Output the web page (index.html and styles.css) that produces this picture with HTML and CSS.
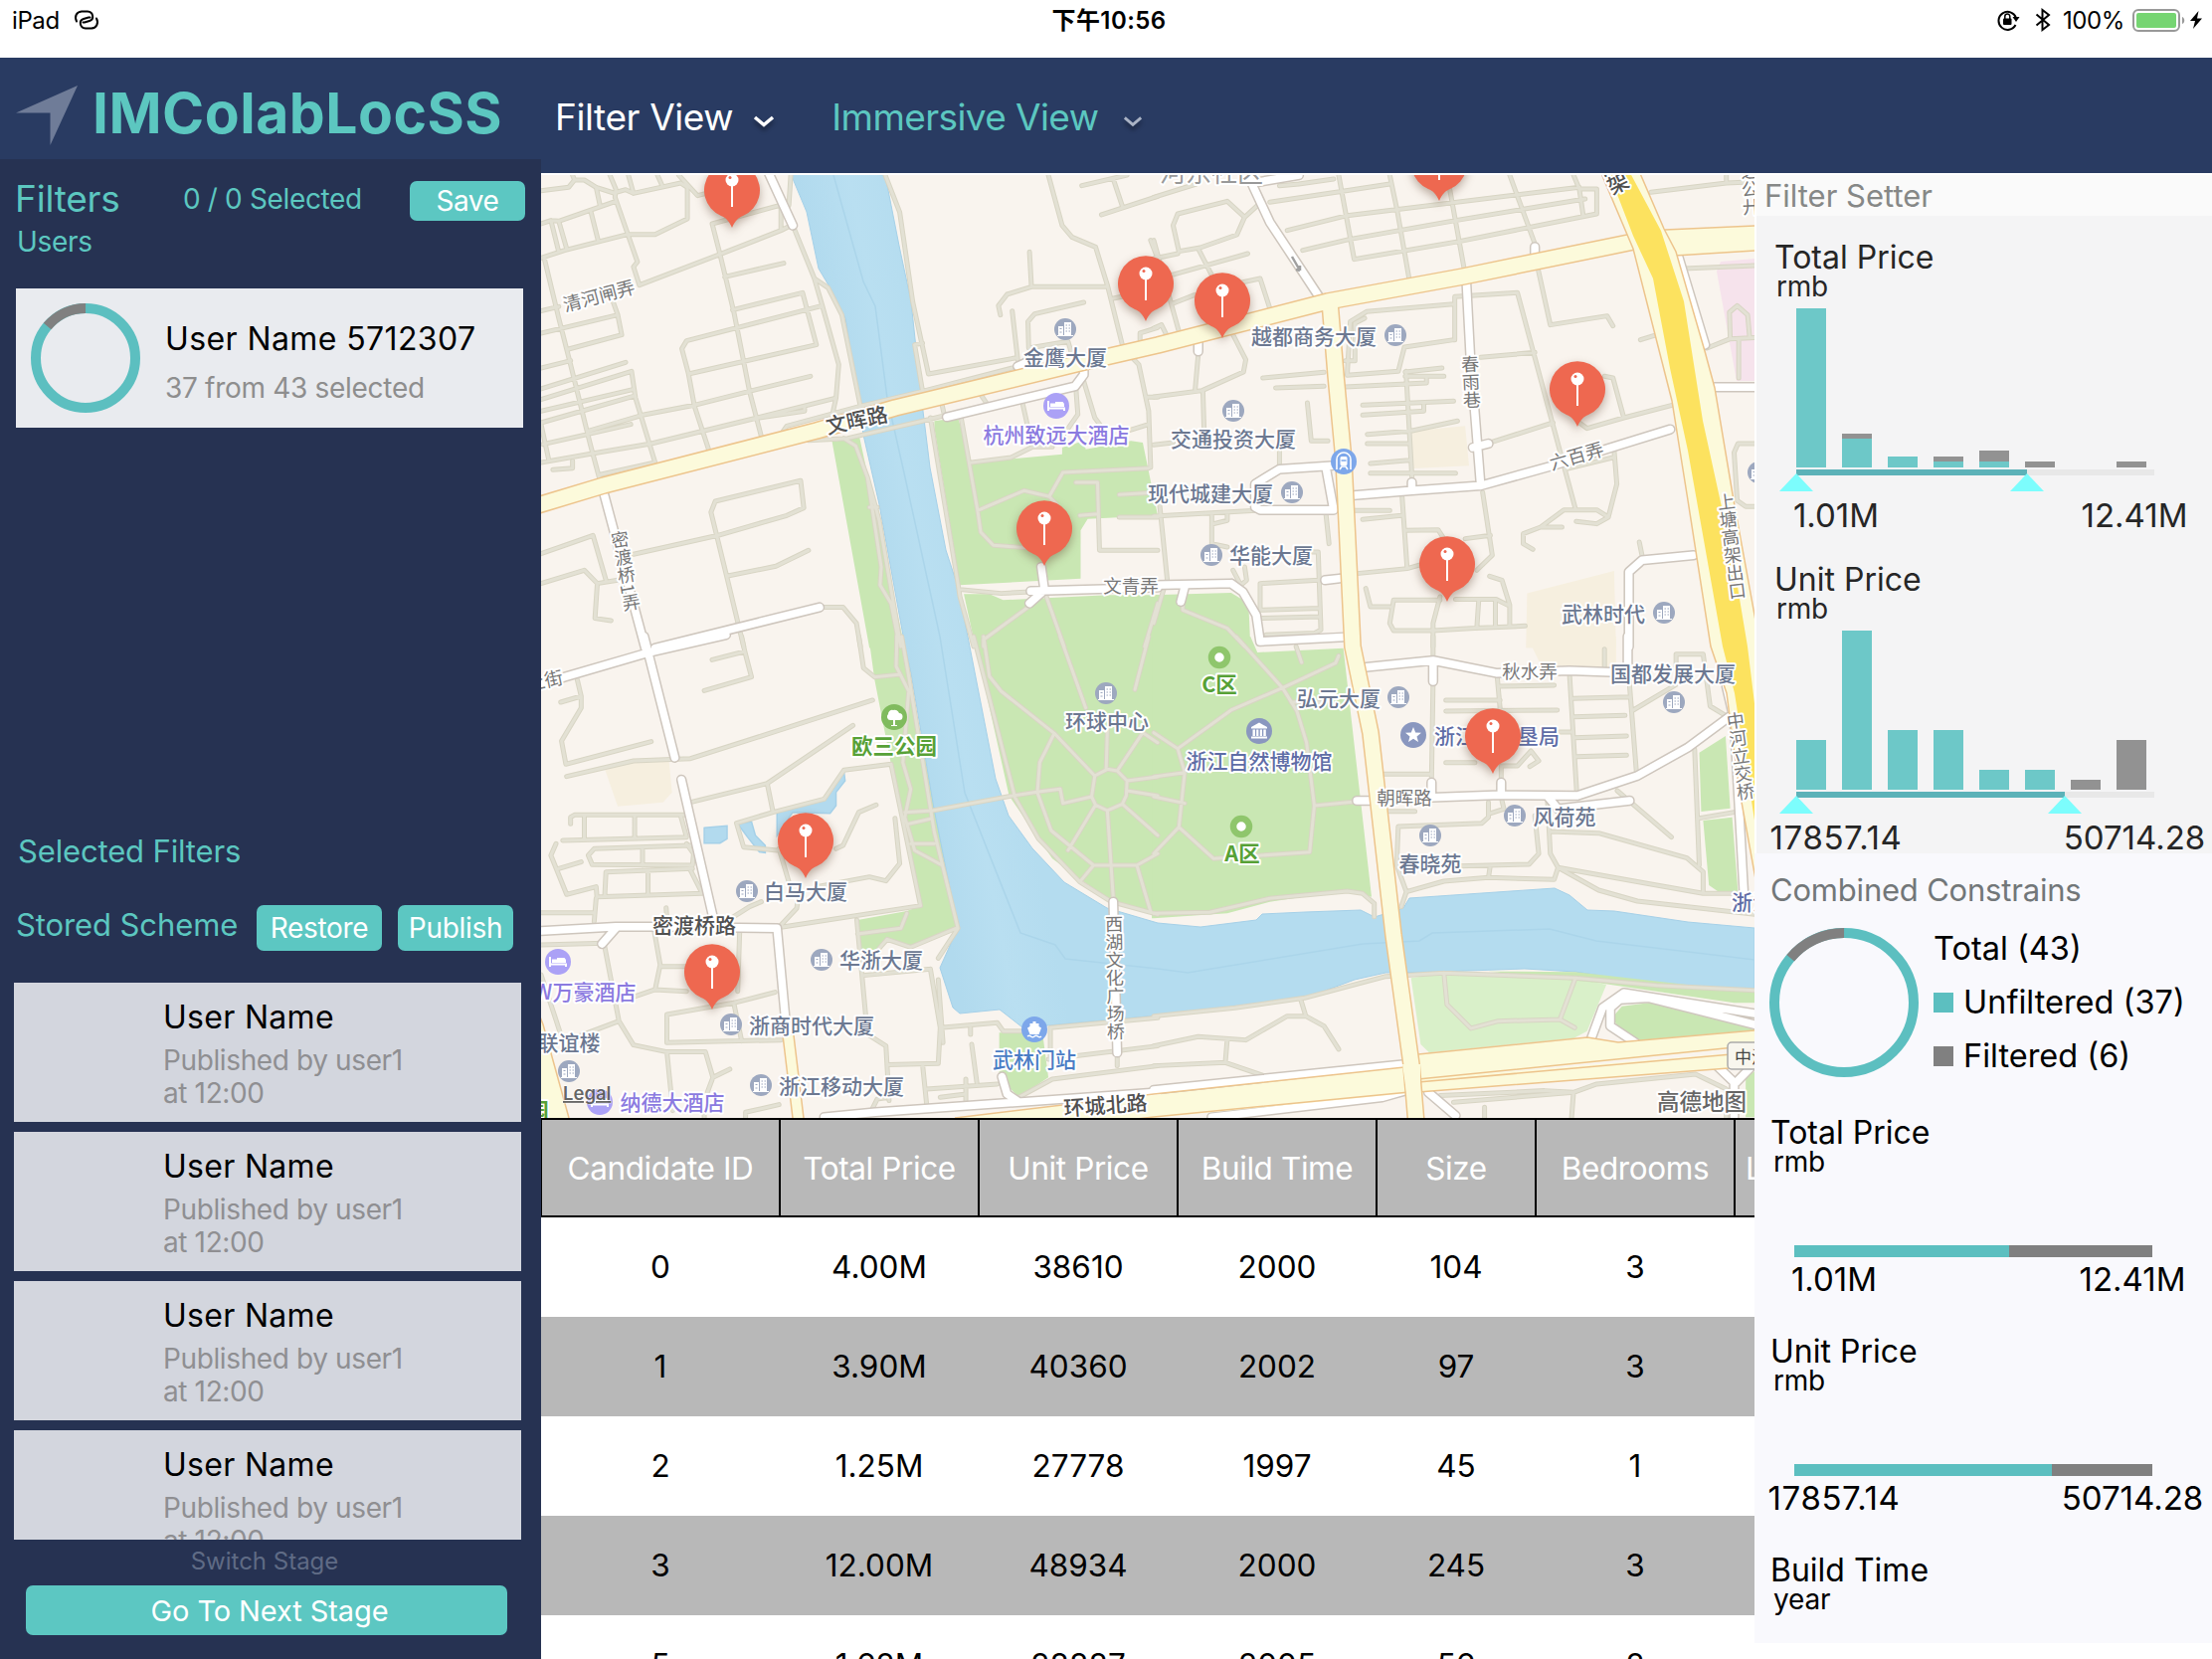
FILE: index.html
```html
<!DOCTYPE html>
<html lang="zh-CN">
<head>
<meta charset="utf-8">
<title>IMColabLocSS</title>
<link rel="stylesheet" href="styles.css">
</head>
<body>
<div class="app">
  <div class="status">
    <div class="status-left"><span>iPad</span>
      <svg width="26" height="20" viewBox="0 0 26 20" fill="none" stroke="#000" stroke-width="2" stroke-linecap="round"><path d="M3 11.500C.5 6.500 3 2 8 1.500h6c6 .5 7 8 2 9.500l-5 1.500H9.500"/><path d="M23 8.500c2.500 5 0 9.500-5 10h-6c-6-.5-7-8-2-9.500l5-1.500h1.500"/></svg>
    </div>
    <div class="status-time">下午10:56</div>
    <div class="status-right">
      <svg width="24" height="22" viewBox="0 0 24 22"><path d="M18.500 16A9 9 0 1 1 19 9" fill="none" stroke="#000" stroke-width="2"/><path d="M15.500 8h7l-3.500 5z"/><rect x="6" y="9.500" width="8.500" height="6.500" rx="1"/><path d="M7.800 10V7.500a2.500 2.500 0 0 1 5 0V10" fill="none" stroke="#000" stroke-width="1.500"/></svg>
      <svg class="bt" width="16" height="24" viewBox="0 0 16 24" fill="none" stroke="#000" stroke-width="2"><path d="M1.500 6.500L14 17l-6.500 5V2L14 7 1.500 17.500"/></svg>
      <span>100%</span>
      <svg width="54" height="24" viewBox="0 0 54 24"><rect x="1" y="1" width="46" height="21" rx="5" fill="none" stroke="#999" stroke-width="2"/><rect x="4" y="4" width="40" height="15" rx="2" fill="#76d572"/><path d="M50 8c3 1 3 6 0 7z" fill="#999"/></svg>
      <svg class="bolt" width="12" height="18" viewBox="0 0 12 18"><path d="M8.500 0L0 10h5L3 18l9-10.500H7z"/></svg>
    </div>
  </div>

  <div class="workspace">
    <aside class="left">
      <div class="brand">
        <svg width="62" height="60" viewBox="0 0 62 60"><path d="M62 0L0 27.500h34.500V60z" fill="#6f7c98"/></svg>
        <h1>IMColabLocSS</h1>
      </div>
      <div class="sidebar">
        <div class="filters-head"><h2>Filters</h2><span class="count">0 / 0 Selected</span><button class="btn save">Save</button></div>
        <div class="users">Users</div>
        <div class="user-card">
          <svg width="110" height="110" viewBox="-55 -55 110 110" fill="none" stroke-width="10"><circle r="50" stroke="#5cbfc0"/><circle r="50" pathLength="43" stroke="#808080" stroke-dasharray="6 37" transform="rotate(-140.200)"/></svg>
          <div class="user-text"><div class="user-name">User Name 5712307</div><div class="user-sub">37 from 43 selected</div></div>
        </div>
        <div class="selected-title">Selected Filters</div>
        <div class="stored"><span class="stored-title">Stored Scheme</span><button class="btn restore">Restore</button><button class="btn publish">Publish</button></div>
        <div class="schemes">
          <div class="scheme"><div class="scheme-name">User Name</div><div class="scheme-sub">Published by user1<br>at 12:00</div></div>
          <div class="scheme"><div class="scheme-name">User Name</div><div class="scheme-sub">Published by user1<br>at 12:00</div></div>
          <div class="scheme"><div class="scheme-name">User Name</div><div class="scheme-sub">Published by user1<br>at 12:00</div></div>
          <div class="scheme"><div class="scheme-name">User Name</div><div class="scheme-sub">Published by user1<br>at 12:00</div></div>
        </div>
        <div class="switch">Switch Stage</div>
        <button class="btn next">Go To Next Stage</button>
      </div>
    </aside>

    <div class="right">
      <nav class="nav">
        <span class="nav-item active">Filter View</span>
        <svg class="chev" width="22" height="14" viewBox="0 0 22 14" fill="none" stroke="#fff" stroke-width="3.500"><path d="M2 2l9 7.500L20 2"/></svg>
        <span class="nav-item immersive">Immersive View</span>
        <svg class="chev dim" width="20" height="14" viewBox="0 0 22 14" fill="none" stroke="#aab3c5" stroke-width="3.200"><path d="M2 2l9 7.500L20 2"/></svg>
      </nav>
      <div class="content">
        <main class="center">
          <svg class="map" width="1220" height="948" viewBox="544 176 1220 948">
            <defs>
              <g id="building"><circle r="11" fill="#9da8bf"/><path d="M-7 6V-3h5v9zM-1 6V-7h7V6z" fill="#fff"/><path d="M-8 6.500H8" stroke="#fff"/><path d="M-5.500-.5h2M-5.500 3h2M.5-4h1.500M3.500-4H5M.5-1h1.500M3.500-1H5M.5 2h1.500M3.500 2H5" stroke="#9da8bf" stroke-width="1.200"/></g>
              <g id="hotel"><circle r="13" fill="#aba1f6"/><path d="M-8-5V5M-8 2.500H8V5" fill="none" stroke="#fff" stroke-width="2"/><path d="M-6-2.500h5V-4h7.500L8-2v3H-6z" fill="#fff"/></g>
              <g id="pin"><path class="pin-body" d="M0 66C-3 59-6 56-11 54A28 28 0 1 1 11 54C6 56 3 59 0 66z"/><path d="M0 22V45" stroke="#fff" stroke-width="2"/><circle cy="18" r="6.500" fill="#fff"/><circle cx="-2" cy="15.500" r="1.500" fill="#ec6750"/></g>
              <path id="nw-lanes" d="M0 65L70 55 85 33H110L140 55 185 72 215 62 235 73 355 42 372 55V150L290 197H220L60 245 0 268M80 18L85 33M140 55L150 110M0 165L25 155 45 157 190 97M25 155L45 250M45 157L65 240M127 130L145 215M222 18L235 73M175 18L190 60 188 85 245 280 235 295 250 350M296 18L307 47M350 18L398 80 430 70M8 268L45 450 75 590 125 830 150 940M250 350L455 257 610 185 635 170M605 110L435 165 455 257 490 430 530 670 563 820M635 18L630 110M610 110V180M467 325L617 284M487 425L665 373 700 530 375 618M0 495L195 440 180 390M195 440L205 500 70 543M0 428L45 415M0 600L75 578M715 412L370 518 358 542 375 618 390 715 430 860M642 175L695 330 730 358 765 440 812 715M695 330L715 412 757 590 750 690 740 745M0 663L215 583M0 695L230 610 240 690 290 885 150 922M0 730L233 665M0 765L235 685M5 830L118 800 228 770M120 790L258 742 390 712 530 670 685 625M0 885L130 858 280 828 550 750 745 692M555 750L670 730V715M0 770L20 880M80 880V902L30 907M610 800L625 775 812 715 970 670 1205 598M680 818L780 812 970 760 1020 745M770 812L800 835 830 930 865 1200 862 1255 890 1310 905 1400V1440M830 930L860 1060 915 1440M835 1020H855M875 18L912 130 945 400 985 618 1205 570M970 525L950 530 970 670M1290 18L1325 170 1350 205 1410 235 1440 350 1480 540 1520 590 1545 730 1550 900M1242 250L1247 355H1440M1247 355L1185 378 1163 412 1168 440M1198 428L1212 575M1380 402L1255 437 1238 460 1240 540 1340 520 1350 560M1375 50L1490 18M1455 30L1478 112M1425 138L1568 82M1455 390L1490 382M1550 215L1568 270M1523 515V495L1568 478M1225 710L1240 790M1360 660L1365 740 1330 800M1380 640L1408 750 1430 785M1095 640L1135 710M1010 660L1025 740M1068 750L1110 1030 1118 1095 1150 1135 1230 1142M1095 885L1195 870 1250 838H1300M1110 1030L1228 970 1292 988 1327 915 1545 902M1292 988L1310 1010M1360 945H1415L1420 1150H1568M1370 1045L1415 1040M1470 982L1568 975M1470 1050H1568M1540 688H1568M1490 790L1545 770M990 750L1060 1250 1065 1290 1100 1440M1065 1268L1170 1280 1245 1275M1240 1320L1125 1420V1440M1285 1290L1330 1440M1568 1310L1535 1440M235 1162L450 1105 625 1045 668 1022 660 940 443 1002 432 1035 472 1228 515 1440M472 1228L597 1198 680 1150M0 1160L132 1105 165 1240M0 1250L110 1210 143 1250 195 1240M143 1250L137 1355 178 1362M718 1322H768L802 1370 812 1440"/>
              <path id="ne-lanes" d="M0 85L110 45M62 135L190 97 235 145 215 198 120 237 65 248 50 170ZM235 145L268 110M0 270L62 255M115 240L150 320M45 320L243 255M0 215L65 490M50 405L105 380M275 330L300 420M215 345L275 330M0 480L20 470 35 505M325 50L375 45 465 30M300 100L480 68 610 45M345 185L500 140 1100 55M385 245L505 212 780 155 1115 90M518 272L790 218 1145 135V60H1100L1110 140M478 18L518 272M610 18L630 130 660 330M765 60L803 305M920 18L985 225M1085 18L1100 60M1285 70L1480 42V18M1480 42L1560 38M205 500L238 575 232 612 125 668 0 687M115 560L107 665M127 668L130 780M0 832L50 825M500 620L508 460 550 430 775 407M778 515V385L940 373 1090 1025M545 450L520 465V578H495M775 515L648 537 632 610 500 622M282 630L440 613M315 660L440 655M650 612L745 600M650 625H750M495 657L705 645V630M652 610L668 940M540 712L775 700M540 742L698 730V710M552 800L665 790 785 760M552 828H660M560 888L660 878M560 917H780M993 300L1025 470 1172 443 1187 473M1258 515L1300 500M845 568L985 553M1165 625L1187 630 1215 750M1100 765L1120 782 1215 750 1340 712M870 825L1032 765M1065 905L1187 870M1190 850L1197 950 1175 1050 1145 1070 1092 1063M1175 1050L1145 1028H1060L1000 1080 955 1100V1130L980 1147M1000 1080H1055M397 705L407 820H450M325 830V890M0 1047L265 1030M15 1010L35 1240M150 1040V1130L190 1140M155 1070L190 1060V1035M205 1210L225 1255 240 1240 235 1200M445 1040L453 1130M275 1250L425 1240M410 1155H425L432 1390 415 1400 290 1405M275 1250V1330L430 1325M280 1355L430 1350M515 1030H610M540 1057L640 1045M642 990L655 1205M525 1220L655 1205 700 1190M650 1090L735 1088 750 1115M805 1115L870 1105M850 975L875 1165 835 1210M868 1228L900 1240 920 1315V1375M548 1265L560 1320H610M780 1298H885L915 1315M740 1300H620L610 1370 620 1392H722L830 1385 960 1378M740 1290L722 1370V1440M840 1300L835 1385M883 1300V1378M1255 1125L1262 1165M1370 300L1568 290M1430 540L1490 512 1568 508M1490 512L1488 432 1508 412 1535 440 1540 505M1512 512V630M1568 828H1510L1500 855 1508 1000 1530 1018H1568M75 1310V1330L190 1385 235 1440M25 1270L0 1370"/>
              <path id="sw-lanes" d="M92 130L102 180V215L52 315 63 385 280 317M50 198L102 180M65 422L235 375 380 368 600 285 843 192M380 500L575 443 793 268M575 443L590 530M435 70L518 45M510 0L518 45 535 122 415 163M808 0L820 95 848 122 910 115M905 0L903 90 935 165 920 380 940 460 925 545 950 645 1020 690M917 0L935 120 1000 590 1060 880 1010 970M890 385L770 403 720 490 590 530 497 563 515 635 600 645M890 385L965 812 610 877M605 640L630 740M750 640L768 630 808 530 852 508M900 548L912 685 877 737 835 725 700 755M560 800L530 815 490 845M655 780L650 820 605 877M75 565V545L85 538H365M55 615L370 605 355 540M110 540V608M238 540V605M380 630L135 640 120 660 130 688 385 690 388 655 370 625M258 635V690M385 700L165 710 162 780M38 625L25 660 65 778 140 755 142 785 410 775 378 700M45 700L102 680M272 708V778M140 790L135 860M0 833H135M318 818L320 850M288 890L303 990 290 1065 240 1085M303 995H370M505 890L500 1070M290 1065L370 1070M0 930L160 925 198 1160 75 1215M198 1160L235 1232 320 1253H418L437 1330 480 1305M437 1330L415 1400V1450M320 1253L335 1430M0 1020L50 1200M320 1225V1140L490 1105 595 1073M320 1225L610 1217M490 1105L510 1220M520 1450V1435L605 1412M803 855L830 1200 877 1235 885 1400M820 1022L990 1003M805 897L915 880 930 835M860 940L880 913 940 937 1055 880M990 1003L1015 1180M1010 1035L1022 1225M1015 1180L1160 1165 1175 1190H1220M883 1292L1010 1288 1015 1180M970 1290L982 1430M980 1365L1160 1350M1015 1390L1080 1380M1080 1335V1400M1092 1180V1200M1095 1230L1108 1345M840 1430L855 1395 885 1390M1215 1390L1300 1335 1568 1295M1290 1275L1568 1235M1295 1180V1270M1465 1260V1295M1295 1180L1568 1150M925 530L995 525 1200 480 1265 468 1320 460 1327 503 1400 483M935 565L990 550M940 625H1000M1100 0L1205 485 1265 610 1370 740 1450 800 1568 838M1125 0L1140 120 1170 165 1305 292 1408 420 1440 400 1465 405 1490 435 1488 480 1478 505 1440 525 1410 508 1400 483 1408 420M1320 0L1385 215M1545 0L1510 160M1305 292L1268 380 1262 470 1297 585 1405 690H1515L1568 655M1440 280L1437 398M1465 405L1530 290 1568 320M1490 435L1568 423M1490 465L1568 480M1478 505L1568 600M1440 525L1455 790M1410 508L1340 645M1405 690L1370 740M1515 690L1550 830"/>
              <path id="se-lanes" d="M722 0V70M722 140L718 430M590 415H718M755 192H895M755 225L1043 222M893 150L1035 147M888 125L895 215M755 380H830M898 440V390H940L975 345 995 375 972 392M1075 120L1093 465M1085 187L1230 182M1085 242L1218 238M1088 305L1222 300M1093 362L1222 358M1048 288H1080M1228 120L1248 415M1235 225L1350 145M1350 100V53H1420L1438 210 1480 240M1165 38V90M1198 465L1338 605M1398 340L1410 690M1410 548L1500 530M605 527H675M865 500V545L848 563 632 573 628 690 653 770 750 738 865 727 1035 733 1045 697 1025 655 1018 500M900 495L905 520 865 535M985 540L995 655 970 687 790 692M870 690L865 727M1025 588L1150 593 1378 668 1420 710V770M1045 697L1300 750 1420 775H1510M1045 697L1150 765 1250 798 1568 840M653 770L640 815M213 0L333 155 200 222 62 338 0 290M333 155L470 80 478 58M333 155L370 225 395 320 415 510 520 498M415 510L403 650 155 670 65 575 80 410 62 338M0 423L80 410M0 483L80 503M65 575L0 655M368 30L382 78M0 835L145 832 300 790 500 768 540 775 570 805V845M355 198H430M0 1145L210 1120 390 1090 600 1025 750 1015 1090 1030 1300 1052 1568 1068M380 1095L393 1145H345L238 1217 115 1207 0 1235M393 1145L440 1175 478 1245M190 1215L185 1285 0 1295M185 1285L285 1325M750 1015L758 1110 820 1182 890 1160 1050 1155 1088 1180M1050 1155L1090 1030M775 1405L1085 1375 1080 1450M740 1385L1010 1370 1085 1375 1145 1350 1400 1320 1480 1365V1450M855 1420V1450"/>
              <path id="nw-streets" d="M160 980L265 1445M290 1445L708 1322M578 10L640 170M1032 748L1358 655 1380 620V600M1212 595L1240 580M1272 1200L1280 1270M1245 1273L1568 1262M1280 1270L1242 1310"/>
              <path id="ne-streets" d="M240 10L300 160 430 390M265 40L375 18M115 520V550M985 235V262M808 340L818 560 845 955 667 970 510 985M667 945V970M845 955L1030 895 1335 785M825 840L865 828M460 895L325 905 262 950V1020L275 1028H465L445 900M480 1235L443 1240M0 1255L200 1250 230 1275 265 1345 275 1425 490 1412M80 1260L70 1305M1395 1165L1262 1180 1228 1215V1440M1355 260L1425 530M1450 658H1568"/>
              <path id="sw-streets" d="M262 0L340 365M0 145L60 122 268 50 470-5M357 432L440 860M0 888L190 875H290L600 880 625 1200M190 880L155 927M1455 800L1465 1255M1172 1328L1185 1380 1210 1400M720 1450L850 1435 1568 1375"/>
              <path id="se-streets" d="M550 92L722 72 885 110 1075 103 1180 107M1225 0V100M722 75V135M525 495H570M720 485L895 478 1095 480 1250 420 1380 335 1490 240M718 440V480M898 440V478M1020 485L1045 520 1230 495M1480 150L1500 250 1525 770M1130 1215L1160 1120 1215 1075 1568 1140M1245 1225L1180 1175V1120L1205 1095 1280 1090 1568 1175M0 1368L650 1290M150 1450L590 1390 650 1370M710 1375L780 1445M1460 1300L1500 1345V1450M1568 1270L1505 1345"/>
              <path id="avenues" d="M534 510L607 488 821 433 900 410 1090 364 1164 347 1335 303 1471 278 1652 241M1337 303L1343 377 1351 463 1360 650 1378 737 1401 940 1419 1070 1424 1130"/>
              <g id="lanes"><use href="#nw-lanes" transform="translate(544 170) scale(.3954 .3333)"/><use href="#ne-lanes" transform="translate(1160 170) scale(.389 .3333)"/><use href="#sw-lanes" transform="translate(544 640) scale(.3954 .3333)"/><use href="#se-lanes" transform="translate(1160 640) scale(.389 .3333)"/></g>
              <g id="streets"><use href="#nw-streets" transform="translate(544 170) scale(.3954 .3333)"/><use href="#ne-streets" transform="translate(1160 170) scale(.389 .3333)"/><use href="#sw-streets" transform="translate(544 640) scale(.3954 .3333)"/><use href="#se-streets" transform="translate(1160 640) scale(.389 .3333)"/></g>
              <linearGradient id="water" gradientUnits="userSpaceOnUse" x1="850" y1="420" x2="950" y2="400"><stop offset="0" stop-color="#b1daee"/><stop offset=".5" stop-color="#b9dff1"/><stop offset="1" stop-color="#b4dcef"/></linearGradient>
            </defs>

            <rect x="544" y="176" width="1220" height="948" fill="#f9f4ee"/>
            <g class="park">
              <path transform="translate(544 170) scale(.3954 .3333)" d="M740 822L810 810 925 1445H835ZM1000 760L1060 750 1095 885 1325 860V840L1380 820 1385 845 1500 820 1530 825 1568 1045 1390 1055 1372 1090V1235L1065 1255 1000 780ZM1075 1282H1140L1175 1300 1440 1285H1570V1445H1105Z"/>
              <path transform="translate(1160 170) scale(.389 .3333)" d="M-5 1285L200 1278 245 1310 250 1445H-5Z"/>
              <path transform="translate(544 640) scale(.3954 .3333)" d="M833 0H917L1060 880 940 937 880 913 850 945 815 950 805 855 930 828 965 812 890 385 848 130ZM1100 0H1570V838L1450 800 1300 670 1190 480ZM1165 1195H1275L1290 1330 1215 1390 1165 1330Z"/>
              <path transform="translate(1160 640) scale(.389 .3333)" d="M-5 0H250L268 48 490 35 563 785 500 765 300 800 190 835 0 850H-5ZM1478 300L1410 350 1415 528 1490 518ZM1420 555L1495 545 1510 770H1460L1435 750Z"/>
            </g>
            <g fill="#f6efdf"><path transform="translate(1160 170) scale(.389 .3333)" d="M668 790L805 775 815 895 670 903ZM965 1280L1190 1212 1195 1445H962Z"/><path transform="translate(1160 640) scale(.389 .3333)" d="M965 0H1195V95L1000 85Z"/><path transform="translate(544 640) scale(.3954 .3333)" d="M163 403L235 375 325 370 333 470 310 500 195 512Z"/></g>
            <path fill="#f6e3ec" d="M1730 263L1764 260V383H1746L1726 273z"/>
            <path fill="url(#water)" stroke="#a5d0e8" d="M793 170L811 213 823 270 835 290 850 320 868 437 884 507 910 650 916 677 939 813 963 933 945 973 958 1013 965 1019 1005 1015 1014 1022 1028 1033 1066 1030 1164 1021 1238 1013 1316 1002 1362 985 1393 978 1448 977 1533 974 1584 977 1666 990 1764 997V933L1697 927 1623 916 1596 915 1578 900 1563 893 1417 903 1411 913 1382 922 1368 915 1312 917 1269 919 1263 925 1207 932 1164 928 1113 913 1070 887 1038 853 1014 820 1001 783 973 640 963 590 951 553 935 470 926 397 916 303 904 247 890 176z"/>
            <path fill="none" stroke="#abd5ea" stroke-width="1.500" d="M838 176L868 283 880 308 892 400 910 480 945 640 970 797 1026 938 1061 950 1071 964 1164 974 1194 978 1370 949 1427 946 1440 938 1558 934 1605 946 1764 965"/>
            <path fill="#b2daee" stroke="#a5d0e8" stroke-width="1.500" transform="translate(544 640) scale(.3954 .3333)" d="M600 530L720 490 770 405 773 435 750 470V510L735 533 640 530 600 600ZM415 577L473 571V610L455 623H415ZM500 565L535 558 545 600 570 630V652L555 650 525 605Z"/>
            <g transform="translate(1160 640) scale(.389 .3333)"><path fill="#d9f0c9" d="M665 1030L750 1015 1090 1030 1170 1050 1120 1190 1085 1212 712 1255 690 1230Z"/><path class="park" d="M865 1010L1090 1012 1568 1075V1105H1500L1150 1045ZM1185 1150L1210 1115 1280 1105 1568 1190 1225 1222ZM1530 1330L1568 1300V1450H1530Z"/></g>

            <use href="#lanes" class="lane-edge"/><use href="#lanes" class="lane-core"/>
            <use href="#streets" class="street-edge"/><use href="#streets" class="street-core"/>

            <path class="yellow" d="M534 1000L546 1030 572 1124H534zM787 1041H798L808 1124H797zM960 1124L1160 1101 1414 1073 1417 1099 1160 1124 1160 1124zM1426 1060L1596 1043 1627 1048 1764 1036V1052L1426 1086zM1426 1085L1764 1057V1072L1426 1098z"/>
            <path class="yellow-edge" d="M534 1000L546 1030 572 1124M787 1041L797 1124M798 1041L808 1124M960 1124L1160 1100 1412 1073M1100 1130L1160 1123 1417 1098M1426 1060L1596 1043 1627 1048 1764 1036M1426 1085L1764 1051M1426 1088L1764 1058M1426 1098L1764 1072"/>
            <use href="#avenues" class="avenue-edge"/>
            <path class="yellow" d="M1640 233L1674 231 1764 227V253L1684 257 1640 248z"/><path class="yellow-edge" d="M1674 231L1764 227M1684 257L1764 252"/>
            <use href="#avenues" class="avenue-core"/>
            <path class="yellow" d="M1410 1070H1428V1098H1414z"/>
            <path class="yellow yellow-edge fillable" d="M1609 172L1642 250 1681 403 1697 503 1720 650 1736 697 1748 790 1768 900V640L1743 503 1724 390 1714 353 1685 253 1673 230 1648 172z"/>
            <path fill="#fce25f" d="M1638 172L1670 232 1693 303 1712 423 1742 560 1757 650 1768 740V850L1744 697 1732 650 1697 453 1679 370 1662 280 1642 237 1622 185 1614 172z"/>

            <g class="label">
              <text x="1071" y="367">金鹰大厦</text><text x="1321" y="346">越都商务大厦</text><text x="1240" y="449">交通投资大厦</text><text x="1217" y="504">现代城建大厦</text><text x="1278" y="566">华能大厦</text><text x="1612" y="625">武林时代</text><text x="1113" y="733">环球中心</text><text x="1346" y="710">弘元大厦</text><text x="1682" y="685">国都发展大厦</text><text x="1573" y="829">风荷苑</text><text x="1438" y="876">春晓苑</text><text x="810" y="904">白马大厦</text><text x="886" y="973">华浙大厦</text><text x="816" y="1039">浙商时代大厦</text><text x="572" y="1056">联谊楼</text><text x="846" y="1100">浙江移动大厦</text>
              <g class="purple"><text x="1062" y="445">杭州致远大酒店</text><text x="588" y="1005">W万豪酒店</text><text x="676" y="1116">纳德大酒店</text></g>
              <g class="civic"><text x="1266" y="773">浙江自然博物馆</text><text x="1505" y="748">浙江省农垦局</text><text x="1762" y="915">浙江</text></g>
              <g class="green"><text x="899" y="758">欧三公园</text><text x="1226" y="696">C区</text><text x="1249" y="866">A区</text><text x="541" y="1125">园</text></g>
              <text class="blue" x="1040" y="1073">武林门站</text>
            </g>
            <g class="road-name">
              <text x="1137" y="596">文青弄</text><text x="1538" y="682">秋水弄</text><text x="1412" y="809">朝晖路</text>
              <text transform="translate(604 304) rotate(-15)">清河闸弄</text><text transform="translate(1587 465) rotate(-16)">六百弄</text><text transform="translate(549 691) rotate(-12)">上街</text>
              <text class="major" transform="translate(863 430) rotate(-12)">文晖路</text><text class="major" x="698" y="938">密渡桥路</text><text class="major" transform="translate(1112 1119) rotate(-4)">环城北路</text><text class="major down" transform="translate(1622 175) rotate(-27)">高架</text>
              <text class="big" x="1218" y="183">河东社区</text>
              <text class="down" transform="translate(1479 384) rotate(-3)">春雨巷</text><text class="down" transform="translate(629 574) rotate(-10)">密渡桥1弄</text><text class="down" transform="translate(1121 983) rotate(-1)">西湖文化广场桥</text><text class="down" transform="translate(1741 549) rotate(-7)">上塘高架出口</text><text class="down" transform="translate(1750 760) rotate(-8)">中河立交桥</text><text class="down" transform="translate(1760 190) rotate(-3)">之公廾</text>
            </g>
            <g><use href="#building" x="1071" y="331"/><use href="#building" x="1403" y="337"/><use href="#building" x="1240" y="413"/><use href="#building" x="1299" y="495"/><use href="#building" x="1218" y="558"/><use href="#building" x="1673" y="616"/><use href="#building" x="1768" y="475"/><use href="#building" x="1112" y="697"/><use href="#building" x="751" y="896"/><use href="#building" x="826" y="965"/><use href="#building" x="735" y="1030"/><use href="#building" x="572" y="1077"/><use href="#building" x="765" y="1091"/><use href="#building" x="1406" y="701"/><use href="#building" x="1683" y="706"/><use href="#building" x="1523" y="820"/><use href="#building" x="1438" y="840"/><use href="#hotel" x="1062" y="408"/><use href="#hotel" x="561" y="967"/><use href="#hotel" x="603" y="1108"/></g>
            <g transform="translate(899 721)"><circle r="13" fill="#80bb5e"/><path fill="#fff" d="M-1 8V3h-3a3.500 3.500 0 0 1-2-6 4 4 0 0 1 5-4 4.500 4.500 0 0 1 6 3A3.500 3.500 0 0 1 5 3H1v5h2v1h-6V8z"/></g>
            <g fill="#fff" stroke="#8fc66c" stroke-width="6.500"><circle cx="1226" cy="661" r="8"/><circle cx="1248" cy="831" r="8"/></g>
            <g transform="translate(1266 735)"><circle r="13" fill="#8a97bf"/><path fill="#fff" d="M0-8.500L8-4v1.500H-8V-4zM-6.500-1.500h2.500V5h-2.500zM-2.800-1.500h2.200V5h-2.200zM.8-1.500H3V5H.8zM4.300-1.500h2.500V5H4.300zM-8 5.500H8v2H-8z"/></g>
            <g transform="translate(1421 739)"><circle r="13" fill="#8a97bf"/><path fill="#fff" d="M0-8L2.200-2.500 8-2.300 3.500 1.500 5 7 0 3.800-5 7l1.500-5.500L-8-2.300l5.800-.2z"/></g>
            <g transform="translate(1351 464)"><circle r="13" fill="#7da7ea"/><path fill="none" stroke="#fff" stroke-width="1.600" d="M-7 8V-2A7 7 0 0 1 7-2V8M-4 8l2-3h4l2 3"/><rect x="-3.500" y="-5" width="7" height="9" rx="1.500" fill="#fff"/><path stroke="#7da7ea" stroke-width="1.500" d="M-2.500-1h5"/></g>
            <g transform="translate(1040 1035)"><circle r="13" fill="#7da7ea"/><path fill="#fff" d="M-1.500-8h3v2h3v3L7-1.500 4.500 5h-9L-7-1.500-4.500-3v-3h3z"/><path fill="none" stroke="#fff" stroke-width="1.500" d="M-7 7q2-1.500 3.500 0 1.800 1.500 3.500 0 1.800-1.500 3.500 0 1.800 1.500 3.500 0"/></g>
            <path d="M1299 258l8 14m0 0l-4-1m4 1v-5" fill="none" stroke="#a0a0a0" stroke-width="2.500"/>
            <rect x="1737" y="1048" width="40" height="27" rx="4" fill="#f8f6ee" stroke="#aaa" stroke-width="1.500"/><text class="shield" x="1744" y="1069">中河</text>
            <text class="amap" x="1666" y="1116">高德地图</text><text class="legal" x="566" y="1106">Legal</text>
            <g class="pins"><use href="#pin" x="736" y="163"/><use href="#pin" x="1152" y="257"/><use href="#pin" x="1229" y="274"/><use href="#pin" x="1447" y="136"/><use href="#pin" x="1586" y="363"/><use href="#pin" x="1050" y="503"/><use href="#pin" x="1455" y="539"/><use href="#pin" x="1501" y="712"/><use href="#pin" x="810" y="817"/><use href="#pin" x="716" y="949"/></g>
          </svg>
          <div class="table">
            <div class="row head"><span>Candidate ID</span><span>Total Price</span><span>Unit Price</span><span>Build Time</span><span>Size</span><span>Bedrooms</span><span>Living Rooms</span></div>
            <div class="row"><span>0</span><span>4.00M</span><span>38610</span><span>2000</span><span>104</span><span>3</span></div>
            <div class="row alt"><span>1</span><span>3.90M</span><span>40360</span><span>2002</span><span>97</span><span>3</span></div>
            <div class="row"><span>2</span><span>1.25M</span><span>27778</span><span>1997</span><span>45</span><span>1</span></div>
            <div class="row alt"><span>3</span><span>12.00M</span><span>48934</span><span>2000</span><span>245</span><span>3</span></div>
            <div class="row"><span>5</span><span>1.62M</span><span>28887</span><span>2005</span><span>56</span><span>2</span></div>
          </div>
        </main>

        <aside class="panel">
          <section class="setter">
            <div class="setter-title">Filter Setter</div>
            <div class="setter-body">
              <div class="group">
                <div class="g-title">Total Price</div><div class="g-unit">rmb</div>
                <div class="bars">
                  <div class="bar"><b style="height:160px"></b></div><div class="bar"><i style="height:5px"></i><b style="height:29px"></b></div><div class="bar"><b style="height:11px"></b></div><div class="bar"><i style="height:5px"></i><b style="height:6px"></b></div><div class="bar"><i style="height:11px"></i><b style="height:6px"></b></div><div class="bar"><i style="height:6px"></i></div><div class="bar"></div><div class="bar"><i style="height:6px"></i></div>
                </div>
                <div class="track"><div class="fill" style="width:232px"></div><svg class="knob lo" width="34" height="18"><path d="M17 0L34 18H0z"/></svg><svg class="knob" style="left:232px" width="34" height="18"><path d="M17 0L34 18H0z"/></svg></div>
                <div class="ends"><span>1.01M</span><span>12.41M</span></div>
              </div>
              <div class="group">
                <div class="g-title">Unit Price</div><div class="g-unit">rmb</div>
                <div class="bars">
                  <div class="bar"><b style="height:50px"></b></div><div class="bar"><b style="height:160px"></b></div><div class="bar"><b style="height:60px"></b></div><div class="bar"><b style="height:60px"></b></div><div class="bar"><b style="height:20px"></b></div><div class="bar"><b style="height:20px"></b></div><div class="bar"><i style="height:10px"></i></div><div class="bar"><i style="height:50px"></i></div>
                </div>
                <div class="track"><div class="fill" style="width:270px"></div><svg class="knob lo" width="34" height="18"><path d="M17 0L34 18H0z"/></svg><svg class="knob" style="left:270px" width="34" height="18"><path d="M17 0L34 18H0z"/></svg></div>
                <div class="ends wide"><span>17857.14</span><span>50714.28</span></div>
              </div>
            </div>
          </section>
          <section class="combined">
            <div class="combined-title">Combined Constrains</div>
            <div class="summary">
              <svg width="150" height="150" viewBox="-75 -75 150 150" fill="none" stroke-width="10"><circle r="70" stroke="#5cbfc0"/><circle r="70" pathLength="43" stroke="#808080" stroke-dasharray="6 37" transform="rotate(-140.200)"/></svg>
              <div class="legend"><div>Total (43)</div><div><i class="sw teal"></i>Unfiltered (37)</div><div><i class="sw gray"></i>Filtered (6)</div></div>
            </div>
            <div class="cgroup"><div class="g-title">Total Price</div><div class="g-unit">rmb</div><div class="cbar"><div style="width:216px"></div></div><div class="ends"><span>1.01M</span><span>12.41M</span></div></div>
            <div class="cgroup"><div class="g-title">Unit Price</div><div class="g-unit">rmb</div><div class="cbar"><div style="width:259px"></div></div><div class="ends wide"><span>17857.14</span><span>50714.28</span></div></div>
            <div class="cgroup"><div class="g-title">Build Time</div><div class="g-unit">year</div></div>
          </section>
        </aside>
      </div>
    </div>
  </div>
</div>
</body>
</html>
```
FILE: styles.css
```css
* { box-sizing: border-box; }
body { margin: 0; background: #fff; color: #000; font-family: Inter, "Noto Sans CJK SC", sans-serif; }
h1, h2 { margin: 0; }
svg { display: block; flex: none; }
.app { width: 2224px; height: 1668px; overflow: hidden; display: flex; flex-direction: column; }

.status { height: 58px; padding: 0 10px 0 12px; display: grid; grid-template-columns: 1fr auto 1fr; font-size: 24px; line-height: 41px; }
.status-left { display: flex; gap: 14px; letter-spacing: -.4px; }
.status-left svg { margin-top: 10px; }
.status-time { font-weight: 600; font-size: 24px; letter-spacing: .4px; padding-left: 4px; }
.status-right { display: flex; justify-content: flex-end; }
.status-right svg { margin-top: 9px; }
.status-right .bt { margin: 8px 12px 0 14px; }
.status-right span { margin-right: 8px; letter-spacing: -.4px; }
.status-right .bolt { margin: 11px 0 0 4px; }

.workspace { flex: 1; min-height: 0; display: grid; grid-template-columns: 544px 1680px; }
.left { display: flex; flex-direction: column; }
.brand { height: 102px; background: #293b62; display: flex; padding: 28px 0 0 16px; }
.brand h1 { margin: -2px 0 0 15px; font-size: 57px; line-height: 60px; letter-spacing: .5px; color: #5cc7c0; white-space: nowrap; }
.sidebar { flex: 1; background: #263252; color: #5cc7c0; }
.btn { border: 0; padding: 0; border-radius: 7px; background: #5cc7c2; color: #fff; font: 28px/40px Inter, sans-serif; }
.filters-head { height: 64px; display: flex; padding-left: 15px; }
.filters-head h2 { width: 169px; margin-top: 16px; font-size: 37px; line-height: 48px; font-weight: 400; letter-spacing: -.2px; }
.count { width: 228px; margin-top: 22px; font-size: 28px; line-height: 36px; letter-spacing: -.35px; }
.save { width: 116px; height: 40px; margin-top: 22px; letter-spacing: -.5px; }
.users { height: 36px; padding-left: 17px; font-size: 28px; line-height: 38px; letter-spacing: -.3px; }
.user-card { width: 510px; height: 140px; margin: 30px 0 0 16px; padding: 15px 0 0 15px; display: flex; gap: 25px; background: #e9ebef; }
.user-name { margin-top: 16px; color: #000; font-size: 32px; line-height: 40px; letter-spacing: .4px; }
.user-sub { margin-top: 11px; color: #8e8e8e; font-size: 28px; line-height: 36px; letter-spacing: -.3px; }
.selected-title { margin: 406px 0 34px 18px; font-size: 31px; line-height: 40px; letter-spacing: -.15px; }
.stored { display: flex; height: 46px; padding-left: 16px; }
.stored-title { width: 242px; font-size: 31px; line-height: 40px; letter-spacing: -.1px; white-space: nowrap; }
.restore, .publish { height: 46px; line-height: 46px; letter-spacing: -.3px; }
.restore { width: 126px; }
.publish { width: 116px; margin-left: 16px; }
.schemes { width: 510px; height: 560px; margin: 32px 0 0 14px; overflow: hidden; }
.scheme { height: 140px; margin-bottom: 10px; padding: 15px 0 0 150px; background: #d3d6de; }
.scheme-name { color: #000; font-size: 32px; line-height: 40px; letter-spacing: .3px; }
.scheme-sub { margin-top: 7px; color: #8f8f92; font-size: 28px; line-height: 33px; letter-spacing: -.38px; }
.switch { margin: 7px 0 9px; padding-right: 12px; text-align: center; color: #5f6b85; font-size: 24px; line-height: 30px; }
.next { display: block; width: 484px; height: 50px; margin-left: 26px; padding-left: 6px; font-size: 29px; line-height: 51px; letter-spacing: -.1px; }

.right { display: flex; flex-direction: column; min-height: 0; }
.nav { height: 116px; flex: none; background: #293b62; display: flex; padding: 36px 0 0 14px; font-size: 37px; line-height: 48px; letter-spacing: -.4px; color: #fff; }
.immersive { margin-left: 57px; color: #5cc7c0; letter-spacing: -.6px; }
.chev { margin: 22px 0 0 20px; filter: drop-shadow(0 4px 2px rgba(0, 0, 0, .35)); }
.chev.dim { margin-left: 25px; }
.content { display: grid; grid-template-columns: 1220px 460px; padding-top: 2px; flex: 1; min-height: 0; }
.center { min-width: 0; overflow: hidden; }

.map path { vector-effect: non-scaling-stroke; }
.park { fill: #c9e7b3; }
.lane-edge, .lane-core, .street-edge, .street-core, .avenue-edge, .avenue-core { fill: none; stroke-linecap: round; stroke-linejoin: round; }
.lane-edge { stroke: #d8d5c4; stroke-width: 5; }
.lane-core { stroke: #e3e1d4; stroke-width: 3; }
.street-edge { stroke: #cec6bd; stroke-width: 10.500; }
.street-core { stroke: #fff; stroke-width: 7.500; }
.avenue-edge { stroke: #edc48c; stroke-width: 18; }
.avenue-core { stroke: #fcfadb; stroke-width: 15; }
.yellow { fill: #fcfadb; }
.yellow-edge { fill: none; stroke: #edc48c; stroke-width: 1.500; }
.yellow-edge.fillable { fill: #fcfadb; }
.map text { font-family: "Noto Sans CJK SC", sans-serif; paint-order: stroke; stroke: #fff; stroke-width: 4px; stroke-linejoin: round; text-anchor: middle; }
.label text { font-size: 21px; font-weight: 500; fill: #6c7891; }
.label .purple text { fill: #8b7ae0; }
.label .civic text { fill: #5f6da6; }
.label .green text { font-size: 21.500px; font-weight: 700; fill: #57a136; }
.label text.blue { fill: #4a7cc4; }
.map .road-name text { font-size: 18.500px; fill: #777; }
.map .road-name .major { font-size: 21px; fill: #505050; font-weight: 500; }
.map .road-name .big { font-size: 26px; fill: #999; }
.map .road-name .down { writing-mode: vertical-rl; font-size: 18px; }
.map .road-name .major.down { font-size: 21px; }
.map .shield { font-size: 17px; fill: #444; text-anchor: start; stroke: none; }
.map .amap { font-size: 22.500px; fill: #666; text-anchor: start; font-weight: 500; }
.map .legal { font-family: Inter, sans-serif; font-size: 18.500px; font-weight: 600; fill: #4c4c4c; fill-opacity: .85; stroke-width: 1px; text-anchor: start; text-decoration: underline; }
.pin-body { fill: #ee6850; }
.pins { filter: drop-shadow(0 4px 5px rgba(90, 60, 40, .4)); }

.row { display: grid; grid-template-columns: 240px 200px 200px 200px 160px 200px 200px; height: 100px; font-size: 31.500px; line-height: 100px; text-align: center; background: #fff; white-space: nowrap; }
.row.alt { background: #b8b8b8; }
.row.head { grid-template-columns: 241px 200px 200px 200px 160px 200px 200px; background: #b8b8b8; color: #fff; border-bottom: 2px solid #000; border-top: 2px solid #000; line-height: 97px; letter-spacing: -.4px; }
.row.head span { border-right: 2px solid #000; }
.row.head span:first-child { border-left: 1px solid #000; }
.row.head span:last-child { text-align: left; padding-left: 10px; }

.panel { display: flex; flex-direction: column; }
.setter { height: 682px; flex: none; margin-left: 2px; overflow: hidden; background: #f4f4f5; color: #262626; }
.setter-title { height: 41px; padding-left: 8px; background: #fafafa; color: #868887; font-size: 31px; line-height: 41px; }
.setter-body { padding: 25px 0 0; }
.group { height: 324px; }
.g-title { height: 32px; padding-left: 18px; font-size: 32px; line-height: 34px; }
.g-unit { padding-left: 20px; font-size: 28px; line-height: 28px; letter-spacing: -.2px; }
.bars { height: 160px; margin: 8px 0 0 40px; display: flex; gap: 16px; }
.bar { width: 30px; display: flex; flex-direction: column; justify-content: flex-end; }
.bar b { background: #6dc8c8; }
.bar i { background: #929292; }
.track { position: relative; width: 360px; height: 6px; margin: 2px 0 0 40px; background: #e8e8e8; }
.fill { height: 6px; background: #5cb2b8; }
.knob { position: absolute; top: 4px; left: 0; margin-left: -17px; fill: #7cfdfd; }
.ends { display: flex; justify-content: space-between; width: 440px; margin: 22px 0 0 10px; font-size: 33px; line-height: 36px; }
.ends span { width: 140px; display: flex; justify-content: center; white-space: nowrap; }
.ends.wide span:first-child { letter-spacing: .6px; }
.combined { height: 794px; background: #f9f9fd; padding-top: 17px; }
.combined-title { padding-left: 16px; color: #727779; font-size: 31px; line-height: 40px; letter-spacing: -.2px; }
.summary { height: 207px; display: flex; gap: 14px; padding-left: 15px; }
.summary svg { margin-top: 18px; }
.legend { margin-top: 12px; font-size: 32.500px; line-height: 54px; }
.legend div { display: flex; align-items: center; white-space: nowrap; }
.sw { width: 20px; height: 20px; margin: 0 10px 0 1px; }
.teal { background: #5cbfc0; }
.gray { background: #808080; }
.legend div:first-child { padding-left: 1px; }
.cgroup { height: 220px; }
.cgroup .g-title { padding-left: 16px; }
.cgroup .g-unit { padding-left: 19px; }
.cbar { width: 360px; height: 12px; margin: 70px 0 0 40px; background: #808080; }
.cbar div { height: 12px; background: #5cbfc0; }
.cgroup .ends { margin-top: 4px; }
```
